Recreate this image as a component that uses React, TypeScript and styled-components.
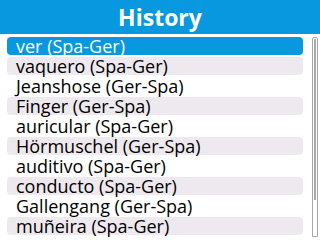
import React from "react";
import styled, { createGlobalStyle } from "styled-components";

const Global = createGlobalStyle`
  html, body { margin: 0; padding: 0; background: #ffffff; }
  body { width: 320px; height: 240px; overflow: hidden; font-family: "Open Sans", "Noto Sans", sans-serif; }
`;

const Screen = styled.div`
  width: 320px;
  height: 240px;
  display: flex;
  flex-direction: column;
  background: #ffffff;
`;

const Header = styled.div`
  height: 34px;
  background: #0898e0;
  color: #ffffff;
  display: flex;
  align-items: center;
  justify-content: center;
  font-family: "Open Sans", "Noto Sans", sans-serif;
  font-weight: bold;
  font-size: 23px;
  line-height: 34px;
  box-sizing: border-box;
`;

const Body = styled.div`
  display: flex;
  padding: 3px 0 0 7px;
  gap: 9px;
`;

const List = styled.div`
  width: 296px;
  display: flex;
  flex-direction: column;
  gap: 2px;
`;

const Row = styled.div<{ $selected?: boolean; $shaded?: boolean }>`
  height: 18px;
  line-height: 18px;
  border-radius: 4px;
  box-sizing: border-box;
  padding-left: 9px;
  display: flex;
  align-items: center;
  font-family: "Open Sans", "Noto Sans", sans-serif;
  font-size: 18px;
  white-space: nowrap;
  background: ${(p) => (p.$selected ? "#0898e0" : p.$shaded ? "#eee9ee" : "#ffffff")};
  color: ${(p) => (p.$selected ? "#ffffff" : "#000000")};
`;

const Track = styled.div`
  width: 6px;
  height: 200px;
  box-sizing: border-box;
  border: 1px solid #a8a8a8;
  border-radius: 2px 2px 0 0;
  position: relative;
`;

const Thumb = styled.div`
  position: absolute;
  left: 1px;
  top: 1px;
  width: 2px;
  height: 161px;
  background: #a8a8a8;
  border-radius: 1px 1px 0 0;
`;

const items = [
  "ver (Spa-Ger)",
  "vaquero (Spa-Ger)",
  "Jeanshose (Ger-Spa)",
  "Finger (Ger-Spa)",
  "auricular (Spa-Ger)",
  "Hörmuschel (Ger-Spa)",
  "auditivo (Spa-Ger)",
  "conducto (Spa-Ger)",
  "Gallengang (Ger-Spa)",
  "muñeira (Spa-Ger)",
];

export default function App() {
  return (
    <>
      <Global />
      <Screen>
        <Header>History</Header>
        <Body>
          <List>
            {items.map((t, i) => (
              <Row key={t} $selected={i === 0} $shaded={i % 2 === 1}>
                {t}
              </Row>
            ))}
          </List>
          <Track>
            <Thumb />
          </Track>
        </Body>
      </Screen>
    </>
  );
}
